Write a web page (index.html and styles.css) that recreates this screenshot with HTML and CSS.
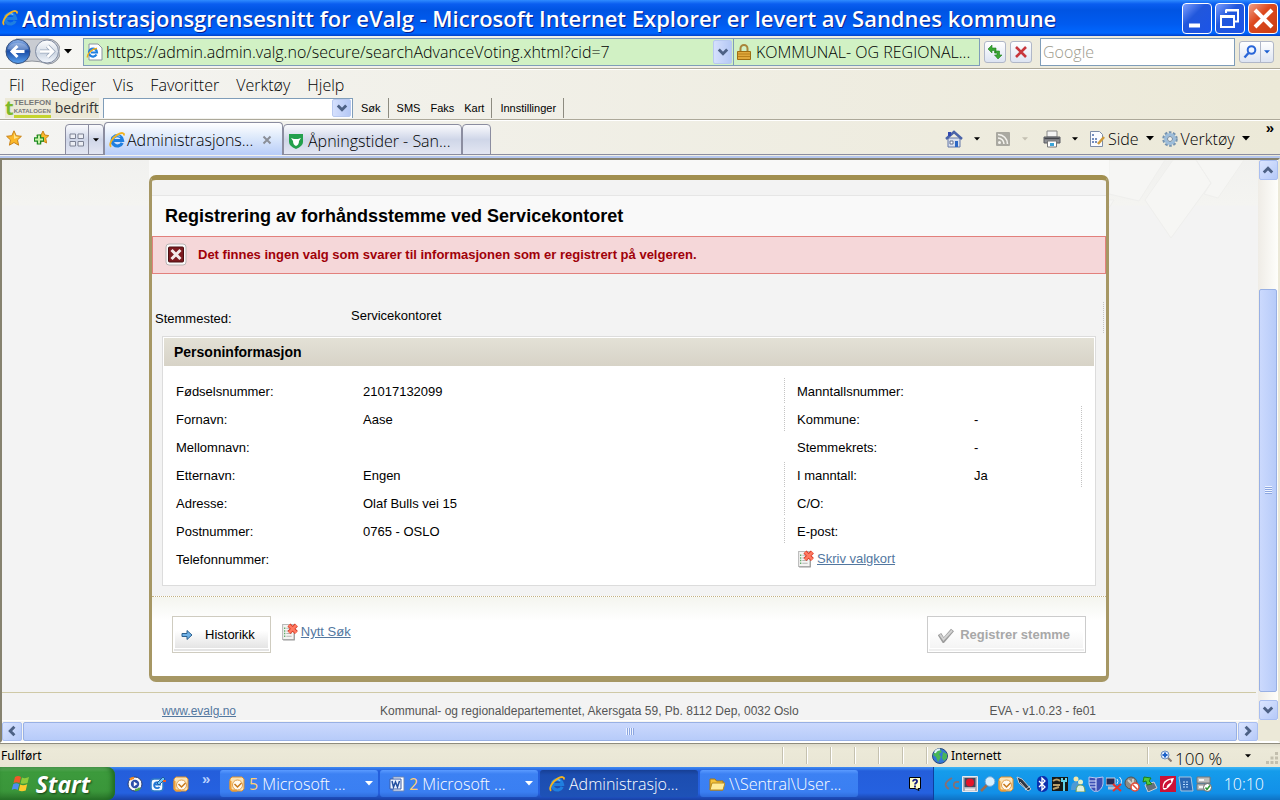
FILE: index.html
```html
<!DOCTYPE html>
<html lang="no">
<head>
<meta charset="utf-8">
<title>Administrasjonsgrensesnitt for eValg</title>
<link rel="stylesheet" href="styles.css">
</head>
<body>
<svg class="defs" aria-hidden="true">
  <defs>
    <linearGradient id="ball" x1="0" y1="0" x2="0" y2="1"><stop offset="0" stop-color="#8fb4ea"/><stop offset=".5" stop-color="#1c4fa8"/><stop offset="1" stop-color="#5aa2f0"/></linearGradient>
    <linearGradient id="pale" x1="0" y1="0" x2="0" y2="1"><stop offset="0" stop-color="#fff"/><stop offset=".6" stop-color="#cfd8e4"/><stop offset="1" stop-color="#f5f9ff"/></linearGradient>
    <symbol id="ie" viewBox="0 0 16 16">
      <path d="M13.200 10.800A5.200 5.200 0 1 1 13.600 8.500H5" fill="none" stroke="#1f7fe0" stroke-width="3.200"/>
      <path d="M4.200 6.200a4.600 4.600 0 0 1 7-1.600" fill="none" stroke="#7cc4ff" stroke-width="1.200"/>
      <path d="M2.200 14.800C-.6 13 3 5.600 8.500 2.600 12.500.300 15.800.400 14.800 3.600" fill="none" stroke="#f2b320" stroke-width="1.800"/>
    </symbol>
    <symbol id="outlook" viewBox="0 0 16 16">
      <path d="M3 1h10l2 2v10l-2 2H3l-2-2V3z" fill="#fbe3b4" stroke="#d98f30"/>
      <path d="M1.500 5v8L3 14.500h5" fill="none" stroke="#ee9d35" stroke-width="2"/><circle cx="8.500" cy="9" r="5" fill="#fffaf0" stroke="#e0a050"/><path d="M5.500 8l3 3 4-4" fill="none" stroke="#c8781a" stroke-width="1.500"/>
    </symbol>
    <symbol id="doc" viewBox="0 0 16 17">
      <path d="M1.500 1.500h11v14h-11z" fill="#f4f4f2" stroke="#b9b9b9"/><path d="M12.500 2v14H2" fill="none" stroke="#999"/>
      <path d="M3 5h1M3 7.500h1M3 10h1M3 12.500h1" stroke="#3a9a48" stroke-width="1.400"/><path d="M5 5h3M5 7.500h3M5 10h5M5 12.500h5" stroke="#b5b5b5"/>
      <path d="M7.500 2l7 7M14.500 2l-7 7" stroke="#d63a26" stroke-width="4"/><path d="M7.500 2l7 7M14.500 2l-7 7" stroke="#ff7a62" stroke-width="2.400"/>
    </symbol>
    <symbol id="star" viewBox="0 0 16 16"><path d="M8 .8l2.200 4.900 5.200.6-3.900 3.600 1.100 5.300L8 12.500l-4.600 2.700 1.100-5.300L.6 6.300l5.200-.6z" fill="#fbb829" stroke="#c9831a"/><path d="M8 3l1.500 3.600 3.500.4-5 2z" fill="#ffe58c"/></symbol>
    <symbol id="caret" viewBox="0 0 8 5"><path d="M0 0h8L4 4.500z" fill="currentColor"/></symbol>
    <symbol id="chev" viewBox="0 0 10 10"><path d="M1.500 3L5 6.500 8.500 3" fill="none" stroke="#4d6185" stroke-width="2.400"/></symbol>
  </defs>
</svg>

<header class="titlebar">
  <svg class="i16"><use href="#ie"/></svg>
  <h1>Administrasjonsgrensesnitt for eValg - Microsoft Internet Explorer er levert av Sandnes kommune</h1>
  <div class="winbtns">
    <button class="win" aria-label="Minimer"><svg viewBox="0 0 28 28"><path d="M6 21.500h11" stroke="#fff" stroke-width="4"/></svg></button>
    <button class="win" aria-label="Gjenopprett"><svg viewBox="0 0 28 28"><path d="M10 9V6.500h12v11h-3M10 6h13" fill="none" stroke="#fff" stroke-width="2"/><path d="M5 12h13v11H5z" fill="none" stroke="#fff" stroke-width="2"/><path d="M5 12.500h13" stroke="#fff" stroke-width="3"/></svg></button>
    <button class="win close" aria-label="Lukk"><svg viewBox="0 0 28 28"><path d="M6 6l17 17M23 6L6 23" stroke="#fff" stroke-width="4"/></svg></button>
  </div>
</header>

<div class="addressbar">
  <div class="nav">
    <svg viewBox="0 0 56 28" class="navsvg" role="img" aria-label="Tilbake og frem"><path d="M12 1h32a12 12 0 0 1 0 25Q28 20 12 26z" fill="#c9ccd2" stroke="#8f949c"/>
      <circle cx="14" cy="13.500" r="12" fill="url(#ball)" stroke="#37517d"/><path d="M3.500 11a11 9 0 0 1 21 0Q14 14 3.500 11z" fill="#fff" opacity=".25"/><path d="M20.500 13.500H8.500M13.500 8l-5.500 5.500 5.500 5.500" fill="none" stroke="#fff" stroke-width="3"/>
      <circle cx="43" cy="13.500" r="11.500" fill="url(#pale)" stroke="#7e8aa0"/><path d="M36 13.500h12M43.500 8l5.500 5.500-5.500 5.500" fill="none" stroke="#9aa7bb" stroke-width="4"/><path d="M36 13.500h12M43.500 8l5.500 5.500-5.500 5.500" fill="none" stroke="#fff" stroke-width="2.500"/></svg>
    <svg class="caret"><use href="#caret"/></svg>
  </div>
  <div class="url">
    <svg class="i18" viewBox="0 0 18 18"><path d="M3 1h9l4 4v12H3z" fill="#fff" stroke="#8a93a0"/><path d="M10.500 11.500A4 4 0 1 1 11 9.500H5" fill="none" stroke="#1f7fe0" stroke-width="2.200"/><path d="M1.500 14.500C.5 11 7 5 11 5.500" fill="none" stroke="#efae1c" stroke-width="1.400"/></svg>
    <input aria-label="Adresse" value="https://admin.admin.valg.no/secure/searchAdvanceVoting.xhtml?cid=7">
    <button class="drop" aria-label="Vis adresser"><svg class="i10"><use href="#chev"/></svg></button>
    <div class="cert"><svg class="i16" viewBox="0 0 16 16"><path d="M4.500 8V4.500a3.500 3.500 0 0 1 7 0V8" fill="none" stroke="#a9853a" stroke-width="2"/><path d="M1.500 7.500h13v8h-13z" fill="#e0a83c" stroke="#a06d12"/><path d="M2 10h12M2 12.500h12" stroke="#b8801c"/></svg><span>KOMMUNAL- OG REGIONAL...</span></div>
  </div>
  <button class="sq" aria-label="Oppdater"><svg class="i16" viewBox="0 0 16 16"><path d="M5 1L1 5l4 4V6.500h2.500V9H9V4H5z" fill="#3aa834" stroke="#23801e" stroke-width=".6"/><path d="M11 15l4-4h-2.500V7H8.500v2H10v2H7.500z" fill="#3aa834" stroke="#23801e" stroke-width=".6"/></svg></button>
  <button class="sq" aria-label="Stopp"><svg class="i14" viewBox="0 0 14 14"><path d="M2 2l10 10M12 2L2 12" stroke="#c8363c" stroke-width="2.600"/></svg></button>
  <input class="google" aria-label="Søk" placeholder="Google">
  <div class="searchgo">
    <button aria-label="Søk"><svg class="i14" viewBox="0 0 14 14"><circle cx="8.500" cy="5" r="3.800" fill="#eef4ff" stroke="#2a66d8" stroke-width="2"/><path d="M5.500 8L1.500 12.500" stroke="#2a66d8" stroke-width="2.400"/></svg></button>
    <button aria-label="Søkevalg"><svg class="caret sm blue"><use href="#caret"/></svg></button>
  </div>
</div>

<nav class="menu"><span>Fil</span><span>Rediger</span><span>Vis</span><span>Favoritter</span><span>Verktøy</span><span>Hjelp</span></nav>

<div class="tkbar">
  <div class="tklogo"><b>t</b><div class="tkname"><span>TELEFON</span><span>KATALOGEN</span></div><i>bedrift</i></div>
  <div class="combo"><input aria-label="Katalogsøk"><button class="drop" aria-label="Vis søk"><svg class="i10"><use href="#chev"/></svg></button></div>
  <button class="tk">Søk</button><hr><button class="tk">SMS</button><button class="tk">Faks</button><button class="tk">Kart</button><hr><button class="tk">Innstillinger</button><hr>
</div>

<div class="tabbar">
  <div class="favs"><svg class="i16"><use href="#star"/></svg>
    <svg class="i16" viewBox="0 0 16 16"><path d="M10 1l1.800 4 4 .6-3 3 .8 4.400L10 11l-4 2 .8-4.400-3-3L8 5z" fill="#fbb829" stroke="#c9831a"/><path d="M6 4.500v10M1 9.500h10" stroke="#1e8a22" stroke-width="4.500"/><path d="M6 5.500v8M2 9.500h8" stroke="#c4f2a4" stroke-width="2"/></svg></div>
  <div class="quick"><button aria-label="Hurtigfaner"><svg class="i16" viewBox="0 0 16 16"><path d="M1 2h5.500v4.500H1zM9 2h5.500v4.500H9zM1 9.500h5.500V14H1zM9 9.500h5.500V14H9z" fill="#eceef4" stroke="#7d8294"/></svg></button><button aria-label="Faneliste"><svg class="caret sm"><use href="#caret"/></svg></button></div>
  <div class="tab active"><svg class="i16"><use href="#ie"/></svg><span>Administrasjons...</span><button class="x" aria-label="Lukk fane"><svg viewBox="0 0 10 10"><path d="M1.500 1.500l7 7M8.500 1.500l-7 7" stroke="#8b8f98" stroke-width="2"/></svg></button></div>
  <div class="tab"><svg class="i16" viewBox="0 0 16 16"><path d="M1 1h14v8q0 4-7 7-7-3-7-7z" fill="#23a04c"/><path d="M3 5l3 1h4l3-1-2 3q0 4-3 5-3-1-3-5z" fill="#fff"/></svg><span>Åpningstider - San...</span></div>
  <button class="newtab" aria-label="Ny fane"></button>
  <div class="tools">
    <svg class="i18" viewBox="0 0 18 18"><path d="M3 8h12v9H3z" fill="#d8dfee" stroke="#6478a8"/><path d="M1 9l8-7 8 7" fill="none" stroke="#4a63a8" stroke-width="2.500"/><path d="M3 2h3v4H3z" fill="#3148b0"/><path d="M10 11h3v6h-3z" fill="#2c67c4"/><path d="M5 11h3v3H5z" fill="#fff" stroke="#62708f"/></svg>
    <svg class="caret sm"><use href="#caret"/></svg>
    <svg class="i16 rss" viewBox="0 0 16 16"><rect x="1" y="1" width="14" height="14" rx="1" fill="#aaa9a1"/><circle cx="4.500" cy="11.500" r="1.500" fill="#f4f3ee"/><path d="M3 7a6 6 0 0 1 6 6M3 3.500a9.500 9.500 0 0 1 9.500 9.500" fill="none" stroke="#f4f3ee" stroke-width="1.600"/></svg>
    <svg class="caret sm dim"><use href="#caret"/></svg>
    <svg class="i18" viewBox="0 0 18 18"><path d="M4 1h10v6H4z" fill="#f4f4f4" stroke="#888"/><path d="M1 7h16v6H1z" fill="#8d8f94" stroke="#5b5d62"/><path d="M1.500 8.500h15" stroke="#44464c" stroke-width="1.500"/><path d="M4.500 11h9v6h-9z" fill="#fff" stroke="#777"/><path d="M7 13h4v3H7z" fill="#3aa5d8"/></svg>
    <svg class="caret sm"><use href="#caret"/></svg>
    <svg class="i16 side" viewBox="0 0 16 16"><path d="M1.500.5h9l3 3v12h-12z" fill="#fbfcff" stroke="#7d8da8"/><path d="M3 4h3M3 8h5M3 11h5" stroke="#4a69a8" stroke-width="1.500" stroke-dasharray="2 1"/><path d="M15 6L9 13" stroke="#cf9a38" stroke-width="2.500"/></svg>
    <span>Side</span><svg class="caret"><use href="#caret"/></svg>
    <svg class="i16 gear" viewBox="0 0 16 16"><circle cx="8" cy="8" r="6.500" fill="none" stroke="#7694b0" stroke-width="2.500" stroke-dasharray="2.600 1.500"/><circle cx="8" cy="8" r="4.500" fill="none" stroke="#9dbdda" stroke-width="3"/><circle cx="8" cy="8" r="2.500" fill="#f2f1ea" stroke="#6d89a6"/></svg>
    <span>Verktøy</span><svg class="caret"><use href="#caret"/></svg><b class="more">»</b>
  </div>
</div>

<main class="viewport">
  <div class="page">
    <svg class="deco" viewBox="0 0 256 84" aria-hidden="true"><path d="M107 34l30 7L163 0h-56zM171 0l-28 40 26 38 40-55-15-23zM194 0l15 23-7 11 14 4L242 0zM107 40h5l-5 8z" fill="#f6f6f4" stroke="#efefed"/></svg>
    <div class="sheet">
      <section class="card">
        <h2>Registrering av forhåndsstemme ved Servicekontoret</h2>
        <div class="error" role="alert"><svg viewBox="0 0 22 24"><rect x="1" y="1" width="20" height="21" rx="3" fill="#fafafa" stroke="#b9b4b4"/><rect x="3.500" y="4" width="15" height="15" rx="1" fill="#7c1b20" stroke="#4c1013"/><path d="M6.500 7l9 9M15.500 7l-9 9" stroke="#f3e9e9" stroke-width="3"/></svg><span>Det finnes ingen valg som svarer til informasjonen som er registrert på velgeren.</span></div>
        <dl class="place"><dt>Stemmested:</dt><dd>Servicekontoret</dd></dl>
        <div class="panel">
          <h3>Personinformasjon</h3>
          <div class="cols">
            <dl class="left">
              <div class="row d"><dt>Fødselsnummer:</dt><dd>21017132099</dd></div>
              <div class="row d"><dt>Fornavn:</dt><dd>Aase</dd></div>
              <div class="row"><dt>Mellomnavn:</dt><dd></dd></div>
              <div class="row d"><dt>Etternavn:</dt><dd>Engen</dd></div>
              <div class="row d"><dt>Adresse:</dt><dd>Olaf Bulls vei 15</dd></div>
              <div class="row d"><dt>Postnummer:</dt><dd>0765 - OSLO</dd></div>
              <div class="row"><dt>Telefonnummer:</dt><dd></dd></div>
            </dl>
            <div class="right">
              <dl>
                <div class="row"><dt>Manntallsnummer:</dt><dd></dd></div>
                <div class="row d"><dt>Kommune:</dt><dd>-</dd></div>
                <div class="row d"><dt>Stemmekrets:</dt><dd>-</dd></div>
                <div class="row d"><dt>I manntall:</dt><dd>Ja</dd></div>
                <div class="row"><dt>C/O:</dt><dd></dd></div>
                <div class="row"><dt>E-post:</dt><dd></dd></div>
              </dl>
              <p class="iconlink"><svg class="idoc"><use href="#doc"/></svg><a href="#">Skriv valgkort</a></p>
            </div>
          </div>
        </div>
        <div class="actions">
          <button class="btn"><svg class="i12" viewBox="0 0 12 12"><path d="M1 4.500h5V1.500l5 4.500-5 4.500V7.500H1z" fill="#6fb1e6" stroke="#2c618f"/></svg><span>Historikk</span></button>
          <p class="iconlink"><svg class="idoc"><use href="#doc"/></svg><a href="#">Nytt Søk</a></p>
          <button class="btn off" disabled><svg class="i16" viewBox="0 0 16 16"><path d="M1.500 7l4 6.500L14.500 3" fill="none" stroke="#9d9d9d" stroke-width="4"/><path d="M2 7.500l3.500 5L14 3.500" fill="none" stroke="#d3d3d3" stroke-width="2"/></svg><span>Registrer stemme</span></button>
        </div>
      </section>
    </div>
    <footer class="foot"><div><a href="#">www.evalg.no</a><span>Kommunal- og regionaldepartementet, Akersgata 59, Pb. 8112 Dep, 0032 Oslo</span><span>EVA - v1.0.23 - fe01</span></div></footer>
  </div>
  <div class="vscroll">
    <button class="sb" aria-label="Rull opp"><svg class="i10 up"><use href="#chev"/></svg></button>
    <div class="vtrack"></div><div class="vthumb"><i></i></div><div class="vrest"></div>
    <button class="sb" aria-label="Rull ned"><svg class="i10"><use href="#chev"/></svg></button>
  </div>
  <div class="hscroll">
    <button class="sb" aria-label="Rull til venstre"><svg class="i10 lt"><use href="#chev"/></svg></button>
    <div class="hthumb"><i></i></div>
    <button class="sb" aria-label="Rull til høyre"><svg class="i10 rt"><use href="#chev"/></svg></button>
  </div>
  <div class="corner"></div>
</main>

<div class="status">
  <span class="done">Fullført</span>
  <div class="cell"></div><div class="cell"></div><div class="cell"></div><div class="cell"></div><div class="cell"></div><div class="cell"></div>
  <div class="zone"><svg class="i16" viewBox="0 0 16 16"><circle cx="8" cy="8" r="7.500" fill="#3377d6" stroke="#2a4a7a"/><path d="M4 2l4-1 2 3-3 2 2 3-3 5-2-5-3-2zM11 4l4 2v4l-3 3-2-3z" fill="#49b656"/><path d="M3 5a5 5 0 0 1 5-3.500" fill="none" stroke="#e2f3ff" stroke-width="2"/></svg><span>Internett</span></div>
  <div class="zoomlvl"><svg class="i12" viewBox="0 0 12 12"><circle cx="5" cy="5" r="4" fill="#dcebff" stroke="#6f8fbd"/><path d="M8 8l3.500 3.500" stroke="#8a7a70" stroke-width="2"/><path d="M5 2.500v5M2.500 5h5" stroke="#1f62c8" stroke-width="2"/></svg><span>100 %</span><svg class="caret sm"><use href="#caret"/></svg>
  <svg class="grip" viewBox="0 0 12 12"><path d="M9 0h3v3H9zM9 4.500h3v3H9zM9 9h3v3H9zM4.500 4.500h3v3h-3zM4.500 9h3v3h-3zM0 9h3v3H0z" fill="#c3bfae"/></svg></div>
</div>

<footer class="taskbar">
  <button class="start"><svg viewBox="0 0 20 20"><path d="M4 3q3-2 6 0L8.500 9Q5.500 7.500 2.500 9z" fill="#f0592a"/><path d="M11 3.500q3 1.500 7-.500L16.500 9q-4 1.500-7 .300z" fill="#8ccb3c"/><path d="M2.200 10.200q3-1.800 6 0L6.700 16q-3-1.800-6 0z" fill="#4f8df0"/><path d="M9.200 10.600q3 1.500 7-.300L14.700 16.500q-4 1.500-7 0z" fill="#fbc92d"/></svg><span>Start</span></button>
  <div class="ql">
    <svg class="i16" viewBox="0 0 16 16"><circle cx="8" cy="8" r="7" fill="#f5f7fb" stroke="#2a3d70"/><path d="M3 3.500a6 6 0 0 1 4-1.500" stroke="#f08a24" stroke-width="2.500" fill="none"/><path d="M13 12a6 6 0 0 1-5 2" stroke="#4fa847" stroke-width="2.500" fill="none"/><circle cx="8" cy="8" r="4.200" fill="#2b4ea8"/><path d="M6.800 5.500L10.500 8l-3.700 2.500z" fill="#fff"/></svg>
    <svg class="i16" viewBox="0 0 16 16"><rect x="1" y="3" width="12" height="12" rx="3" fill="#f2f8ff" stroke="#2d79c9" stroke-width="1.500"/><path d="M9.500 11A3 3 0 1 1 10 8.500H5" stroke="#2277d4" stroke-width="1.800" fill="none"/><path d="M7 7l6-6 2 2-6 6z" fill="#6cc2f5" stroke="#1d5c9c"/><path d="M13 5h3" stroke="#e7602c" stroke-width="2"/></svg>
    <svg class="i16"><use href="#outlook"/></svg><span>»</span>
  </div>
  <div class="tasks">
    <button class="task"><svg class="i16"><use href="#outlook"/></svg><span><em>5</em> Microsoft ...</span><svg class="caret"><use href="#caret"/></svg></button>
    <button class="task"><svg class="i16" viewBox="0 0 16 16"><path d="M4 1h11v14H4z" fill="#fff" stroke="#6883b5"/><path d="M1 3h11v10H1z" fill="#e8f0ff" stroke="#3d5fa8"/><path d="M3 5l1.500 6L6.500 6l2 5L10.500 5" fill="none" stroke="#234f9f" stroke-width="1.500"/></svg><span><em>2</em> Microsoft ...</span><svg class="caret"><use href="#caret"/></svg></button>
    <button class="task on"><svg class="i16"><use href="#ie"/></svg><span>Administrasjo...</span></button>
    <button class="task"><svg class="i16" viewBox="0 0 16 16"><path d="M1 3h5l1.500 2H14v9H1z" fill="#f5c33b" stroke="#a87612"/><path d="M3 7h13l-2 7H1z" fill="#ffeb9a" stroke="#b98a1e"/></svg><span>\\Sentral\User...</span></button>
  </div>
  <svg class="help" viewBox="0 0 12 14"><path d="M.5.5h11v11H9l1 2-4-2H.5z" fill="#ffffc8" stroke="#000"/><path d="M4 4.500C4 2 8.500 2 8 4.500 8 6 6 6 6 7.500M6 8.500v2" fill="none" stroke="#111a80" stroke-width="1.800"/></svg>
  <div class="tray">
    <svg viewBox="0 0 16 16"><path d="M8 2Q-3 8 5 13M15 6q-6-1-5 4 1 3 5 2" fill="none" stroke="#8a6f72" stroke-width="1.800"/></svg>
    <svg viewBox="0 0 16 16"><path d="M.5.5h15v15H.5z" fill="#aeb0bb" stroke="#e9e9ef"/><path d="M2.500 2h11v9h-11z" fill="#42465c"/><circle cx="8" cy="6.500" r="4" fill="#e3142a"/><path d="M3 13.500h10" stroke="#eee" stroke-width="2"/></svg>
    <svg viewBox="0 0 16 16"><path d="M7 9L1 15" stroke="#9c6b50" stroke-width="2.500"/><circle cx="10" cy="5.500" r="4.800" fill="#d4efff" stroke="#7aabd6"/></svg>
    <svg><use href="#outlook"/></svg>
    <svg viewBox="0 0 16 16"><path d="M1 1l5 2 9 10-3 2L3 7z" fill="#303744" stroke="#bfc8d2"/><path d="M4 6l7 8M9 14l5-4" stroke="#c9d0d6"/></svg>
    <svg viewBox="0 0 16 16"><rect x="3" width="11" height="16" rx="5" fill="#0a2fae"/><path d="M5 5l6 6-3 3V2l3 3-6 6" fill="none" stroke="#fff" stroke-width="1.300"/></svg>
    <svg viewBox="0 0 16 16"><path d="M0 1h16v14H0z" fill="#161a18"/><path d="M1 5q4-3 7 0M1 9h7M1 13l6-2" stroke="#b8a06a" stroke-width="2" fill="none"/><path d="M10 2v3h4V2M12 5v10" stroke="#5fd2e6" stroke-width="2" fill="none"/></svg>
    <svg viewBox="0 0 16 16"><circle cx="6" cy="3" r="2.500" fill="#f4e5a8"/><path d="M1 14q0-9 5-8 4 0 4 8z" fill="#4d9bd6"/><circle cx="10.500" cy="6" r="2.500" fill="#e9f0c8"/><path d="M6 16q0-8 5-7 4 0 4 7z" fill="#dff0df" stroke="#6c9a54"/></svg>
    <svg viewBox="0 0 16 16"><path d="M1 1q7 2 14 0v7q-1 6-7 8-6-2-7-8z" fill="#3c50b4" stroke="#b9c6ef"/><path d="M8 2v13M1 5h7M1 8h7M2 11h6" stroke="#dce4ff"/></svg>
    <svg viewBox="0 0 16 16"><path d="M0 2h9v7H0z" fill="#272b53" stroke="#c9d0e4"/><path d="M2 12h8" stroke="#b8bfcf" stroke-width="3"/><path d="M11 3q2 2 0 5M13.500 1q4 4 0 9" fill="none" stroke="#e5eefc"/><path d="M7 8l8 7M15 8l-8 7" stroke="#e8322a" stroke-width="2"/></svg>
    <svg viewBox="0 0 16 16"><circle cx="7" cy="7" r="6" fill="#8d8b87" stroke="#54524f"/><path d="M4 4l6 6M9 3v8" stroke="#cfcdc8" stroke-width="2"/><circle cx="11" cy="11" r="4" fill="#fff" stroke="#e34b36" stroke-width="1.500"/><path d="M8.500 8.500l5 5" stroke="#e34b36" stroke-width="1.500"/></svg>
    <svg viewBox="0 0 16 16"><path d="M3 9l9-3 3 6-9 4z" fill="#65707c" stroke="#c7cfd7"/><path d="M2 1l7 1-2 3 3 3-5 1-1-4-3 1z" fill="#4fca3b" stroke="#1f7d18"/></svg>
    <svg viewBox="0 0 16 16"><path d="M0 0h16v16H0z" fill="#cc1236"/><path d="M14 2Q1 3 3 13q2 2 6-2t5-9z" fill="#fff"/><path d="M11 5q-6 2-6 7" fill="none" stroke="#cc1236" stroke-width="3"/></svg>
    <svg viewBox="0 0 16 16"><path d="M1 1h12l2 14H3z" fill="#2a68b4" stroke="#a8c4de"/><path d="M5 6h6M5 8.500h6M5 11h6" stroke="#bfe0ff" stroke-dasharray="2 1"/></svg>
    <svg viewBox="0 0 16 16"><path d="M1 1h13v6H1zM1 8h13v6H1z" fill="#bcbdbc" stroke="#777"/><path d="M3 4h5M3 11h5" stroke="#f5f5f5" stroke-width="2"/><circle cx="11.500" cy="11.500" r="4" fill="#fff" stroke="#666"/><path d="M9.500 11.500l1.500 2 3-4" fill="none" stroke="#2c9a34" stroke-width="1.500"/></svg>
    <time>10:10</time>
  </div>
</footer>
</body>
</html>
```
FILE: styles.css
```css
* { box-sizing: border-box; }
body { margin: 0; height: 100vh; display: flex; flex-direction: column; overflow: hidden; background: #ece9d8; font: 300 16px/24px "Open Sans", "Noto Sans", sans-serif; color: #000; }
h1, h2, h3, p, dl, dd, hr { margin: 0; }
button, input { font: inherit; color: inherit; margin: 0; padding: 0; border: 0; background: none; min-width: 0; }
button { display: flex; align-items: center; justify-content: center; }
svg { display: block; flex: none; }
span { white-space: nowrap; }
.defs { position: absolute; width: 0; height: 0; }
.i10 { width: 12px; height: 12px; }
.i12 { width: 12px; height: 12px; }
.i14 { width: 14px; height: 14px; }
.i16 { width: 16px; height: 16px; }
.i18 { width: 18px; height: 18px; }
.caret { width: 8px; height: 5px; }
.caret.sm { width: 6px; height: 4px; }
.caret.dim { color: #c4c0b2; }
.caret.blue { color: #1c5fd0; }

/* Title bar */
.titlebar { height: 36px; flex: none; display: flex; align-items: center; gap: 4px; padding: 0 2px; background: linear-gradient(#2f8bff 0, #0a5df0 4px, #0054e3 10px, #005bf0 24px, #0067ff 33px, #0040c8 36px); color: #fff; }
.titlebar h1 { flex: 1; font: 600 22px/32px "Open Sans", sans-serif; text-shadow: 1px 1px #0b1f8a; white-space: nowrap; overflow: hidden; }
.winbtns { display: flex; gap: 3px; }
.win { width: 30px; height: 31px; border: 1px solid #fff; border-radius: 4px; background: linear-gradient(135deg, #7d9fff, #2157dc 40%, #1c54e8); }
.win svg { width: 28px; height: 28px; }
.win.close { background: linear-gradient(135deg, #f0a088, #dd4a20 40%, #c83c12); }

/* Address row */
.addressbar { height: 33px; flex: none; display: flex; align-items: center; gap: 4px; padding: 0 6px 1px 4px; border-bottom: 1px solid #aca899; background: linear-gradient(90deg, #f6f6f4, #ece9d8); }
.nav { width: 75px; display: flex; align-items: center; gap: 4px; }
.navsvg { width: 56px; height: 28px; }
.url { flex: 1; height: 28px; display: flex; align-items: center; padding-left: 2px; border: 1px solid #7f9db9; background: #d1f1c4; min-width: 0; }
.url input { flex: 1; height: 26px; padding-left: 2px; }
.drop { width: 19px; height: 24px; background: linear-gradient(90deg, #d5e0fd, #b5c8f5); border: 1px solid #b8c9f0; border-radius: 2px; }
.cert { width: 246px; height: 26px; display: flex; align-items: center; gap: 4px; margin-left: 1px; padding-left: 2px; border-left: 1px solid #7f9db9; }
.sq { width: 22px; height: 22px; border: 1px solid #b0b7c8; border-radius: 3px; background: linear-gradient(#fff, #dde4f2); }
.google { width: 195px; height: 28px; margin-left: 4px; padding-left: 2px; border: 1px solid #7f9db9; background: #fff; }
.google::placeholder { color: #9b9a8c; opacity: 1; }
.searchgo { display: flex; height: 22px; width: 35px; border: 1px solid #b0b7c8; border-radius: 3px; background: linear-gradient(#fff, #dde4f2); }
.searchgo button { width: 21px; }
.searchgo button + button { width: 13px; border-left: 1px solid #b0b7c8; }

/* Menu and directory toolbar */
.menu { height: 28px; flex: none; display: flex; gap: 17px; padding: 3px 9px 0; border-top: 1px solid #fff; background: linear-gradient(90deg, #f4f4f2, #ece9d8); }
.tkbar { height: 23px; flex: none; display: flex; align-items: center; padding: 0 5px; border-bottom: 1px solid #aca899; background: linear-gradient(90deg, #f4f4f2, #ece9d8); font: 11px/20px "Liberation Sans", sans-serif; }
.tkbar hr { width: 1px; height: 20px; border: 0; background: #8d8b80; }
.tk { padding: 0 7px 0 8px; }
.tk + .tk { padding-left: 3px; }
.tklogo { width: 94px; margin-right: 4px; height: 20px; display: flex; align-items: center; background: #ece9d8; color: #777; }
.tklogo b { color: #7db928; font: 700 20px/18px "Open Sans", sans-serif; }
.tkname { width: 37px; display: flex; flex-direction: column; font: 700 8px/8px "Liberation Sans", sans-serif; border-bottom: 3px solid #c5d42e; }
.tkname span + span { font-size: 6px; }
.tklogo i { margin-left: 4px; font: 400 14px/18px "Open Sans", sans-serif; color: #333; }
.combo { width: 250px; height: 20px; display: flex; padding: 0 1px; border: 1px solid #7f9db9; border-bottom: 0; background: #fff; }
.combo input { flex: 1; }
.combo .drop { height: 18px; }

/* Tabs */
.tabbar { height: 38px; flex: none; display: flex; align-items: flex-end; padding: 0 6px 3px; border-top: 1px solid #fff; background: linear-gradient(#b6c7ee, #b6c7ee) bottom / 100% 2px no-repeat, linear-gradient(#8b8da0, #8b8da0) 0 33px / 100% 1px no-repeat, linear-gradient(90deg, #f4f4f2, #ece9d8); }
.favs { display: flex; gap: 11px; align-self: center; width: 59px; }
.quick { height: 31px; display: flex; border: 1px solid #8b8da0; border-radius: 4px 4px 0 0; background: linear-gradient(#fafafd, #cfd6e8 50%, #e3e6f2); }
.quick button { width: 22px; }
.quick button + button { width: 15px; border-left: 1px solid #8b8da0; }
.tab { width: 179px; height: 31px; display: flex; align-items: center; gap: 4px; padding: 2px 4px 0; border: 1px solid #8b8da0; border-radius: 4px 4px 0 0; background: linear-gradient(#fafafd, #cfd6e8 50%, #e3e6f2); }
.tab.active { height: 33px; border-bottom: 0; gap: 2px; background: linear-gradient(#fff, #dde9fb 45%, #b8cdf8); }
.x { width: 10px; height: 10px; margin-left: auto; margin-right: 6px; }
.x svg { width: 10px; height: 10px; }
.newtab { width: 29px; height: 31px; border: 1px solid #8b8da0; border-radius: 4px 4px 0 0; background: linear-gradient(#fafafd, #cfd6e8 50%, #e3e6f2); }
.tools { flex: 1; height: 33px; display: flex; align-items: center; justify-content: flex-end; }
.tools > * { margin-left: 10px; }
.tools .caret.sm { margin-left: 11px; }
.tools .rss, .tools .rss + .caret + svg { margin-left: 15px; }
.tools .side { margin-left: 11px; }
.tools span { margin-left: 3px; }
.tools span + .caret { margin-left: 7px; }
.tools .gear { margin-left: 8px; }
.tools .more { align-self: flex-start; margin-left: 16px; font: 700 15px/12px "Liberation Sans", sans-serif; }

/* Browser viewport */
.viewport { flex: 1; min-height: 0; display: grid; grid-template-columns: minmax(0, 1fr) 20px; grid-template-rows: minmax(0, 1fr) 21px; border: 2px solid #86826f; border-right-color: #ece9d8; border-bottom-color: #fff; background: #f3f3f3; }
.page { position: relative; overflow: hidden; display: flex; flex-direction: column; background: linear-gradient(#f1f1ef, #f4f4f1 45px, #f3f3f3 46px); font: 13px/16px "Liberation Sans", Arial, sans-serif; padding-right: 2px; }
.deco { position: absolute; top: 0; right: 0; width: 256px; height: 84px; }
.sheet { position: relative; width: 960px; max-width: 100%; margin: 0 auto; padding-top: 15px; background: linear-gradient(#f9f9f8, #f9f9f8) 0 0 / 100% 20px no-repeat; }
.card { border: solid #a69764; border-width: 5px 3px 6px; border-top-color: #a18f4f; border-radius: 7px; background: #f3f3f3; overflow: hidden; }
.card h2 { margin-top: 15px; padding: 8px 13px; border-top: 1px solid #e6e6e6; background: #f9f9f9; font: 700 18px/24px "Liberation Sans", Arial, sans-serif; }
.error { height: 38px; display: flex; align-items: center; gap: 11px; padding-left: 12px; border: 1px solid #e2807c; background: #f5d7d9; color: #a00008; font-weight: 700; }
.error svg { width: 22px; height: 24px; }
.place { height: 31px; margin: 28px 2px 0 3px; display: flex; border-right: 1px dotted #c4c4c4; }
.place dt { width: 196px; padding-top: 9px; }
.place dd { padding-top: 6px; }
.panel { margin: 3px 10px 10px; padding: 1px; border: 1px solid #dcdcdc; background: #fff; }
.panel h3 { padding: 6px 10px; font: 700 14px/16px "Liberation Sans", Arial, sans-serif; background: linear-gradient(#e3e1d6, #d7d3c7); }
.cols { display: flex; padding: 12px 12px 10px; }
.left { width: 609px; }
.right { flex: 1; padding-left: 12px; }
.row { height: 25px; margin-bottom: 3px; padding-top: 6px; display: flex; border-right: 1px dotted transparent; }
.row.d { border-right-color: #c4c4c4; }
.left dt { width: 187px; }
.right dt { width: 177px; }
.iconlink { display: flex; align-items: center; gap: 3px; }
.right .iconlink { height: 25px; }
.idoc { width: 17px; height: 18px; }
a { color: #53779f; text-decoration: underline; }
.actions { display: flex; align-items: flex-start; gap: 10px; padding: 19px 20px 23px; border-top: 1px dotted #c3b183; background: linear-gradient(#f4f5ef, #fff 24px); }
.actions .iconlink { height: 32px; }
.btn { height: 37px; padding: 0 15px 0 8px; gap: 12px; border: 1px solid #cfccc0; background: linear-gradient(#fff 40%, #e4e4e4) 2px 2px / calc(100% - 4px) 29px no-repeat, linear-gradient(#e4e4e4, #e4e4e4) 1px 32px / calc(100% - 2px) 2px no-repeat, #fff; }
.btn.off { margin-left: auto; gap: 6px; padding-left: 10px; border-color: #ccc; color: #a8a8a8; font-weight: 700; background: linear-gradient(#fff 40%, #f4f4f4) 2px 2px / calc(100% - 4px) 29px no-repeat, linear-gradient(#efefef, #efefef) 1px 32px / calc(100% - 2px) 2px no-repeat, #fff; }
.foot { margin-top: 10px; padding-top: 10px; border-top: 1px solid #cfc9a6; font-size: 12px; color: #555; }
.foot div { width: 934px; max-width: 100%; margin: 0 auto; display: flex; }
.foot a { width: 218px; }
.foot span + span { margin-left: auto; }

/* Scroll bars */
.vscroll { display: flex; flex-direction: column; align-items: center; background: linear-gradient(90deg, #efece6, #fefefb); }
.sb { width: 19px; height: 20px; flex: none; border: 1px solid #a9bef0; border-radius: 2px; background: linear-gradient(135deg, #dbe5ff, #b5c9f8); }
.vtrack { flex: 109; }
.vthumb { flex: 403; width: 18px; border: 1px solid #98b0e4; border-radius: 2px; background: linear-gradient(90deg, #cbd9fd, #b7cbf9); display: flex; align-items: center; justify-content: center; }
.vthumb i { width: 7px; height: 8px; background: repeating-linear-gradient(#eef3ff 0 1px, #8ca6e0 1px 2px); }
.vrest { flex: 8; }
.hscroll { display: flex; align-items: center; background: #f7f6f1; border-top: 1px solid #fff; }
.hscroll .sb { width: 20px; height: 19px; }
.hthumb { flex: 1; height: 19px; margin: 0 1px; border: 1px solid #98b0e4; border-radius: 2px; background: linear-gradient(#cbd9fd, #b7cbf9); display: flex; align-items: center; justify-content: center; }
.hthumb i { width: 8px; height: 7px; background: repeating-linear-gradient(90deg, #eef3ff 0 1px, #8ca6e0 1px 2px); }
.corner { background: #ece9d8; }
.up { transform: rotate(180deg); }
.lt { transform: rotate(90deg); }
.rt { transform: rotate(-90deg); }

/* Status bar */
.status { height: 24px; flex: none; display: flex; align-items: center; padding: 0 2px 0 1px; border-top: 1px solid #8f8c7e; background: linear-gradient(#dedbcb, #ece9d8 5px, #e9e6d5); font: 12px/16px "Noto Sans", sans-serif; }
.done { flex: 1; }
.cell { width: 24px; height: 17px; border-left: 1px solid #c5c1af; box-shadow: inset 1px 0 #fff; }
.zone { width: 221px; height: 17px; padding-left: 5px; display: flex; align-items: center; gap: 3px; border-left: 1px solid #c5c1af; box-shadow: inset 1px 0 #fff; }
.zoomlvl { width: 131px; height: 17px; padding-left: 12px; display: flex; align-items: center; gap: 3px; border-left: 1px solid #c5c1af; box-shadow: inset 1px 0 #fff; }
.zoomlvl span { font: 300 17px/20px "Open Sans", sans-serif; padding-top: 6px; flex: 1; }
.grip { width: 12px; height: 12px; margin-left: 12px; align-self: flex-end; }

/* Taskbar */
.taskbar { height: 33px; flex: none; display: flex; align-items: center; background: linear-gradient(#3f8cf3, #245edb 4px, #2561e0 26px, #1941a5); color: #fff; }
.start { width: 115px; height: 33px; padding-right: 14px; gap: 5px; border-radius: 0 8px 8px 0; background: linear-gradient(#67b567, #3c9a3c 5px, #3a963a 24px, #2a742a); box-shadow: inset -3px 0 5px #1f6a22; font: italic 700 23px/30px "Open Sans", sans-serif; text-shadow: 1px 1px 2px #143d14; }
.start svg { width: 20px; height: 20px; }
.ql { width: 105px; padding-left: 12px; display: flex; align-items: center; gap: 7px; }
.ql span { margin-left: 6px; align-self: flex-start; font: 700 15px/6px "Liberation Sans", sans-serif; color: #b9d2ff; }
.tasks { flex: 1; display: flex; gap: 2px; min-width: 0; }
.task { width: 158px; height: 27px; padding: 0 5px 0 9px; gap: 4px; justify-content: flex-start; border-radius: 3px; background: linear-gradient(#5a9bff, #3c81f3 4px, #3a7ff2 22px, #2f6cda); }
.task .caret { margin-left: auto; }
.task em { font-style: normal; font-weight: 400; color: #ffce73; }
.task.on { background: linear-gradient(#173f94, #1c4db0 5px, #1e52b7); }
.help { width: 12px; height: 14px; margin-right: 12px; }
.tray { width: 347px; height: 33px; padding: 0 16px 0 10px; display: flex; align-items: center; gap: 2px; border-left: 1px solid #0d3f9e; background: linear-gradient(#3db4f5, #159ceb 4px, #1290e8 26px, #0e72c4); }
.tray svg { width: 16px; height: 16px; }
.tray time { margin-left: auto; }
```
